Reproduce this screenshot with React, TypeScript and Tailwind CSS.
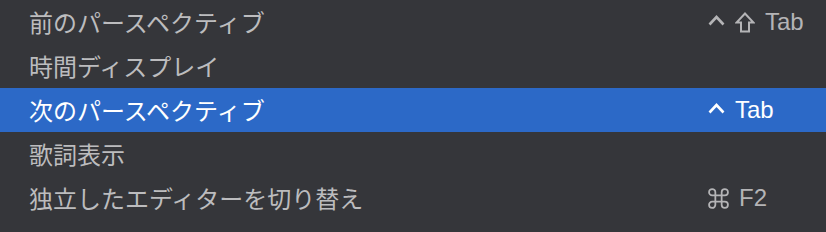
type Key = "ctrl" | "shift" | "cmd" | string;

type MenuItem = {
  label: string;
  shortcut?: Key[];
  active?: boolean;
};

const items: MenuItem[] = [
  { label: "前のパースペクティブ", shortcut: ["ctrl", "shift", "Tab"] },
  { label: "時間ディスプレイ" },
  { label: "次のパースペクティブ", shortcut: ["ctrl", "Tab"], active: true },
  { label: "歌詞表示" },
  { label: "独立したエディターを切り替え", shortcut: ["cmd", "F2"] },
];

function KeyGlyph({ k }: { k: Key }) {
  if (k === "ctrl") {
    return (
      <svg width="17" height="11" viewBox="0 0 17 11" fill="none" className="mt-[-4px]">
        <path d="M1.5 9.5 L8.5 2 L15.5 9.5" stroke="currentColor" strokeWidth="2.6" />
      </svg>
    );
  }
  if (k === "shift") {
    return (
      <svg width="20" height="21" viewBox="0 0 20 21" fill="none">
        <path
          d="M10 1.5 L1.5 10.5 H6 V19.5 H14 V10.5 H18.5 Z"
          stroke="currentColor"
          strokeWidth="2"
          strokeLinejoin="miter"
        />
      </svg>
    );
  }
  if (k === "cmd") {
    return (
      <svg width="21" height="21" viewBox="0 0 20 20" fill="none">
        <path
          d="M7 7 V4 A3 3 0 1 0 4 7 H16 A3 3 0 1 0 13 4 V16 A3 3 0 1 0 16 13 H4 A3 3 0 1 0 7 16 Z"
          stroke="currentColor"
          strokeWidth="1.7"
        />
      </svg>
    );
  }
  return <span className="font-['Liberation_Sans',sans-serif] text-[24px] leading-none">{k}</span>;
}

function Shortcut({ keys }: { keys: Key[] }) {
  return (
    <div className="flex items-center gap-[10px]">
      {keys.map((k, i) => (
        <KeyGlyph key={i} k={k} />
      ))}
    </div>
  );
}

export default function App() {
  return (
    <div className="w-[826px] h-[232px] overflow-hidden bg-[#35363a] font-['Noto_Sans_CJK_JP','Noto_Sans',sans-serif]">
      {items.map((item) => (
        <div
          key={item.label}
          className={`flex items-center h-[44px] pl-[29px] ${
            item.active ? "bg-[#2c69c7] text-white" : "text-[#bcbcbe]"
          }`}
        >
          <div className="w-[679px] text-[24px] leading-none">{item.label}</div>
          {item.shortcut && (
            <div className={item.active ? "text-white" : "text-[#b4b4b6]"}>
              <Shortcut keys={item.shortcut} />
            </div>
          )}
        </div>
      ))}
    </div>
  );
}
